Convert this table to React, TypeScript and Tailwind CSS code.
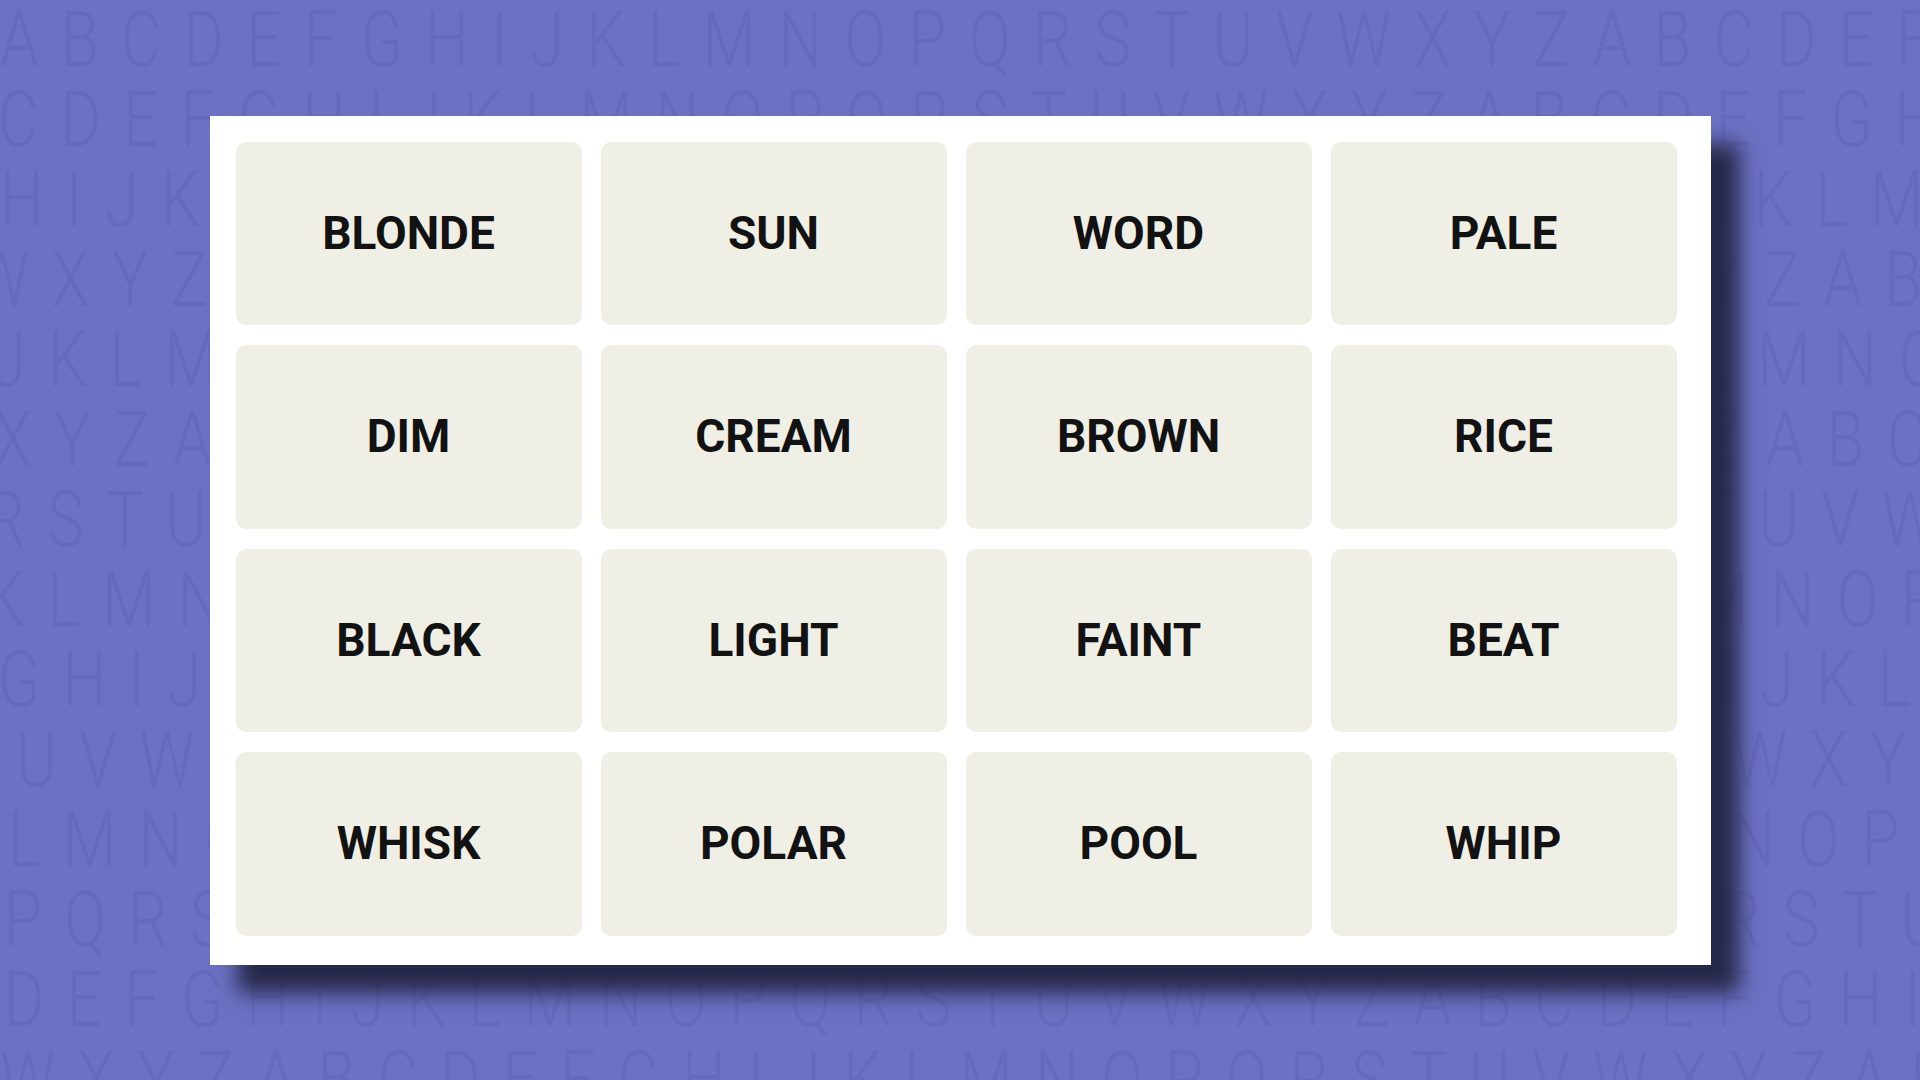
import type { ReactNode } from 'react';

const ALPHABET = 'ABCDEFGHIJKLMNOPQRSTUVWXYZ';

// each background row starts at a different letter and is nudged sideways a little
const bgRows: { start: string; shift: string }[] = [
  { start: 'A', shift: 'ml-[0px]' },
  { start: 'C', shift: 'ml-[-2px]' },
  { start: 'H', shift: 'ml-[0px]' },
  { start: 'W', shift: 'ml-[-26px]' },
  { start: 'J', shift: 'ml-[-8px]' },
  { start: 'X', shift: 'ml-[-6px]' },
  { start: 'R', shift: 'ml-[-14px]' },
  { start: 'K', shift: 'ml-[-14px]' },
  { start: 'G', shift: 'ml-[-2px]' },
  { start: 'U', shift: 'ml-[16px]' },
  { start: 'L', shift: 'ml-[8px]' },
  { start: 'P', shift: 'ml-[4px]' },
  { start: 'D', shift: 'ml-[4px]' },
  { start: 'W', shift: 'ml-[0px]' },
];

const words = [
  'BLONDE', 'SUN', 'WORD', 'PALE',
  'DIM', 'CREAM', 'BROWN', 'RICE',
  'BLACK', 'LIGHT', 'FAINT', 'BEAT',
  'WHISK', 'POLAR', 'POOL', 'WHIP',
];

function rowText(start: string): string {
  const i = ALPHABET.indexOf(start);
  let s = '';
  for (let k = 0; k < 40; k++) s += ALPHABET[(i + k) % 26];
  return s;
}

function LetterBackground() {
  return (
    <div className="col-start-1 row-start-1 isolate flex flex-col overflow-hidden font-['Roboto',sans-serif] font-light text-[77px] leading-[80px] text-[#656abd] select-none">
      {bgRows.map((r, idx) => (
        <div
          key={idx}
          className={`whitespace-nowrap origin-left scale-x-[0.8] tracking-[28px] ${r.shift}`}
        >
          {rowText(r.start)}
        </div>
      ))}
    </div>
  );
}

function Tile({ children }: { children: ReactNode }) {
  return (
    <div className="flex items-center justify-center rounded-[10px] bg-[#efefe6] font-['Roboto',sans-serif] text-[46px] font-bold text-[#121212]">
      {children}
    </div>
  );
}

export default function App() {
  return (
    <div className="grid h-[1080px] w-[1920px] overflow-hidden bg-[#6c71c4]">
      <LetterBackground />
      <div className="relative z-10 col-start-1 row-start-1 flex items-center justify-center">
        <div className="grid h-[849px] w-[1501px] grid-cols-4 grid-rows-4 gap-x-[19px] gap-y-[20px] bg-white pl-[26px] pr-[34px] pt-[26px] pb-[29px] shadow-[28px_28px_20px_#262848]">
          {words.map(w => (
            <Tile key={w}>{w}</Tile>
          ))}
        </div>
      </div>
    </div>
  );
}
